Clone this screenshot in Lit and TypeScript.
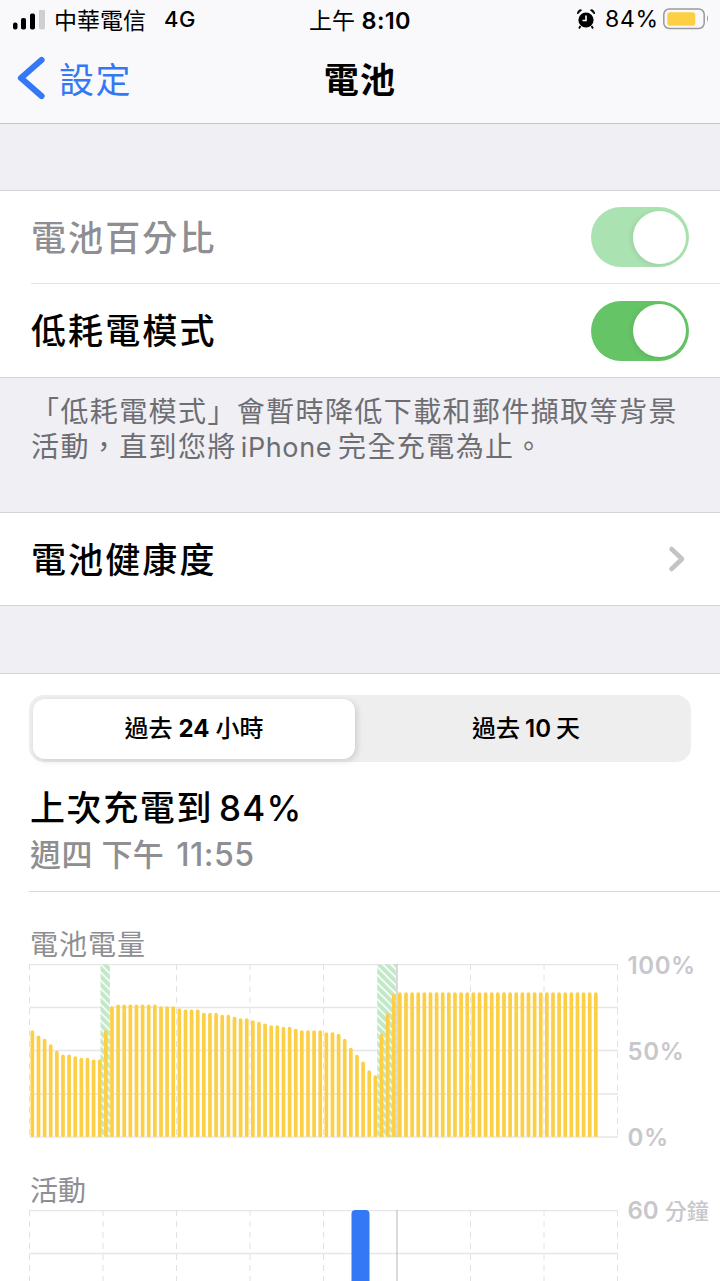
import { LitElement, html, css, svg } from "lit";
import { customElement } from "lit/decorators.js";

const rep = (v: number, n: number) => Array(n).fill(v);
// y of each bar's top edge, in page pixels
const tops: number[] = [
  1030.7, 1036, 1039.3, 1044.7, 1051.3, 1055, 1055, 1056.7, 1058.3, 1058.3, 1060, 1060,
  1030.7, 1006.7, ...rep(1005, 7), ...rep(1006.7, 3), 1008.7, ...rep(1010, 3), ...rep(1013.3, 3),
  ...rep(1015.3, 2), 1017.3, ...rep(1018.7, 2), 1020.7, 1022.3, 1024, ...rep(1025.7, 2),
  ...rep(1027.3, 2), 1029.3, ...rep(1030.7, 4), 1032.7, 1032.7, 1034.3, 1039.3, 1048.3, 1055.3,
  1062, 1070.7, 1075.7, 1034.3, 1013.7, 994.3, ...rep(992.7, 33),
];
const X0 = 28.5;
const Y0 = 964.5;
const verticals = [29, 102.5, 176, 249.5, 323, 396.5, 470, 543.5, 617];

@customElement("app-root")
export class AppRoot extends LitElement {
  static styles = css`
    :host {
      display: block;
      width: 720px;
      height: 1281px;
      overflow: hidden;
      background: #efeff4;
      font-family: Inter, "Noto Sans CJK TC", sans-serif;
      color: #000;
    }
    .head {
      height: 123px;
      background: #f9f9fb;
      border-bottom: 1px solid #c6c6c9;
    }
    .status {
      height: 40px;
      padding-bottom: 2px;
      box-sizing: border-box;
      display: grid;
      grid-template-columns: 1fr auto 1fr;
      align-items: center;
      font-size: 23px;
    }
    .st-left {
      display: flex;
      align-items: center;
      padding-left: 13px;
    }
    .signal {
      margin-top: 4px;
    }
    .carrier {
      margin-left: 8px;
    }
    .net {
      margin-left: 18px;
      font-weight: 500;
      font-size: 22px;
      letter-spacing: 0.5px;
    }
    .st-center b {
      font-weight: 600;
      font-size: 23.5px;
      letter-spacing: 0.4px;
    }
    .st-right {
      display: flex;
      align-items: center;
      justify-content: flex-end;
      padding-right: 11px;
    }
    .pct {
      margin-left: 10px;
      margin-right: 4px;
      letter-spacing: 0.8px;
    }
    .nav {
      height: 83px;
      display: grid;
      grid-template-columns: 1fr auto 1fr;
      align-items: center;
      padding-bottom: 8px;
      box-sizing: border-box;
    }
    .back {
      display: flex;
      align-items: center;
      gap: 13px;
      padding-left: 17px;
      color: #3478f6;
      font-size: 35px;
      letter-spacing: 1.6px;
    }
    .title {
      font-size: 35px;
      font-weight: 700;
      letter-spacing: 1.2px;
    }
    .gap1 {
      height: 66px;
    }
    .group {
      background: #fff;
      border-top: 1px solid #d4d4d7;
      border-bottom: 1px solid #d4d4d7;
    }
    .row {
      height: 92px;
      display: flex;
      align-items: center;
      justify-content: space-between;
      padding: 0 31px;
      font-size: 35px;
      letter-spacing: 2.1px;
      font-weight: 500;
    }
    .row span {
      margin-bottom: 4px;
    }
    .row.sep {
      height: 93px;
      box-sizing: border-box;
      margin-left: 31px;
      padding-left: 0;
      border-bottom: 1px solid #e2e2e4;
    }
    .row.tall {
      height: 93px;
    }
    .row.link {
      padding-right: 33px;
    }
    .dim {
      color: #8e8e93;
    }
    .switch {
      width: 98px;
      height: 60px;
      border-radius: 30px;
      background: #65c466;
      display: flex;
      align-items: center;
      justify-content: flex-end;
      padding-right: 3px;
      box-sizing: border-box;
    }
    .switch.soft {
      background: #aae2b1;
    }
    .knob {
      width: 53px;
      height: 53px;
      border-radius: 50%;
      background: #fff;
      box-shadow: -2px 1px 5px rgba(0, 0, 0, 0.08);
    }
    .note {
      height: 134px;
      box-sizing: border-box;
      padding: 17px 20px 0 31px;
      font-size: 28px;
      line-height: 35px;
      letter-spacing: 1.4px;
      color: #6d6d72;
      white-space: nowrap;
    }
    .note i {
      font-style: normal;
      margin: 0 6px 0 4px;
      letter-spacing: 0.6px;
      font-size: 27px;
    }
    .gap2 {
      height: 67px;
    }
    .panel {
      background: #fff;
      border-top: 1px solid #d4d4d7;
      height: 700px;
    }
    .seg {
      margin: 21px 29px 0;
      height: 67px;
      border-radius: 15px;
      background: #eeeeef;
      display: grid;
      grid-template-columns: 322px 1fr;
      align-items: center;
      box-sizing: border-box;
      padding: 3px 0 3px 4px;
      font-size: 24px;
      text-align: center;
      font-weight: 500;
    }
    .seg b {
      font-weight: 700;
      margin: 0 6px;
    }
    .seg em {
      font-style: normal;
      font-weight: 600;
      margin: 0 5px;
    }
    .seg .on {
      height: 60px;
      line-height: 60px;
      background: #fff;
      border-radius: 12px;
      box-shadow: 2px 2px 6px rgba(0, 0, 0, 0.14);
    }
    .seg .off {
      height: 60px;
      line-height: 60px;
      padding-left: 6px;
    }
    .last {
      margin: 24px 0 0 30px;
      font-size: 35px;
      line-height: 44px;
      font-weight: 500;
      letter-spacing: 1.6px;
    }
    .last span {
      letter-spacing: 1.2px;
      margin-left: 6px;
    }
    .when {
      margin: 5px 0 0 30px;
      font-size: 31px;
      line-height: 40px;
      color: #8e8e93;
      letter-spacing: 0.4px;
      white-space: pre;
      font-weight: 500;
    }
    .when span {
      margin-left: 12px;
      font-size: 32px;
      letter-spacing: 0.5px;
    }
    .divider {
      margin: 16px 0 0 29px;
      height: 1px;
      background: #d9d9db;
    }
    .cap {
      margin: 33px 0 0 30px;
      font-size: 28px;
      line-height: 40px;
      color: #8e8e93;
      letter-spacing: 1px;
    }
    .chart {
      display: flex;
      margin-left: 28.5px;
      margin-top: -1px;
    }
    .chart svg {
      display: block;
      flex: none;
    }
    .axis {
      margin: -12px 0 0 9px;
      height: 200px;
      display: flex;
      flex-direction: column;
      justify-content: space-between;
      font-size: 24px;
      line-height: 28px;
      font-weight: 600;
      color: #c7c7cc;
      letter-spacing: 0.6px;
    }
    .cap2 {
      margin: 19px 0 0 30px;
      font-size: 28px;
      line-height: 40px;
      color: #8e8e93;
      letter-spacing: 0;
    }
    .axis2 {
      margin: -13px 0 0 9px;
      font-size: 24px;
      line-height: 28px;
      font-weight: 600;
      color: #c7c7cc;
      white-space: nowrap;
    }
    .axis2 span {
      font-size: 22px;
      font-weight: 500;
      margin-left: 6px;
    }
  `;

  private grid(h: number, lines: number[]) {
    return svg`
      ${lines.map((y) => svg`<line x1="0.5" x2="589" y1=${y} y2=${y} stroke="#e6e6e8" stroke-width="1.5"></line>`)}
      ${verticals.map((x) =>
        x === 396.5
          ? svg`<line x1=${x - X0} x2=${x - X0} y1="0" y2=${h} stroke="#b5b5b8" stroke-width="1"></line>`
          : svg`<line x1=${x - X0} x2=${x - X0} y1="0" y2=${h} stroke="#e2e2e4" stroke-width="1" stroke-dasharray="6 5"></line>`,
      )}
    `;
  }

  render() {
    const bars = tops.map((t, i) => {
      const x = 30 + 6.125 * i - X0;
      const y = t - Y0;
      return svg`<rect x=${x} y=${y} width="3.7" height=${173 - y} rx="1.85" fill="#fccf45"></rect>`;
    });
    return html`
      <div class="head">
        <div class="status">
          <div class="st-left">
            <svg class="signal" width="33" height="22" viewBox="0 0 33 22">
              <rect x="0" y="12.5" width="4.5" height="7" rx="2" fill="#000"></rect>
              <rect x="8" y="8" width="5" height="11.5" rx="1.8" fill="#000"></rect>
              <rect x="17" y="3.5" width="5" height="16" rx="1.8" fill="#000"></rect>
              <rect x="26" y="-0.5" width="6" height="20" rx="1.8" fill="#cfcfd1"></rect>
            </svg>
            <span class="carrier">中華電信</span>
            <span class="net">4G</span>
          </div>
          <div class="st-center">上午 <b>8:10</b></div>
          <div class="st-right">
            <svg width="18" height="20" viewBox="0 0 18 20">
              <circle cx="9" cy="11" r="7.6" fill="#000"></circle>
              <path d="M9 6.5V11.5H5.5" fill="none" stroke="#fff" stroke-width="1.6"></path>
              <path d="M0.5 5 L4.5 1 Q1 0 0.5 5Z M17.5 5 L13.5 1 Q17 0 17.5 5Z" fill="#000" stroke="#000"></path>
              <path d="M3.5 17 L2 19.5 M14.5 17 L16 19.5" stroke="#000" stroke-width="1.8"></path>
            </svg>
            <span class="pct">84%</span>
            <svg width="46" height="22" viewBox="0 0 46 22">
              <rect x="0.8" y="1" width="40.4" height="19.5" rx="5.5" fill="none" stroke="#9a9a9c" stroke-width="1.5"></rect>
              <rect x="4.3" y="4.3" width="28" height="13.4" rx="2.5" fill="#fccf45"></rect>
              <path d="M44 7 Q46 10.5 44 14Z" fill="#9a9a9c"></path>
            </svg>
          </div>
        </div>
        <div class="nav">
          <div class="back">
            <svg width="29" height="44" viewBox="0 0 29 44">
              <path d="M24.5 4 L4 22 L24.5 40" fill="none" stroke="#3478f6" stroke-width="6.2" stroke-linecap="round" stroke-linejoin="round"></path>
            </svg>
            <span>設定</span>
          </div>
          <div class="title">電池</div>
          <div></div>
        </div>
      </div>

      <div class="gap1"></div>

      <div class="group">
        <div class="row sep">
          <span class="dim">電池百分比</span>
          <div class="switch soft"><div class="knob"></div></div>
        </div>
        <div class="row tall">
          <span>低耗電模式</span>
          <div class="switch"><div class="knob"></div></div>
        </div>
      </div>

      <div class="note">「低耗電模式」會暫時降低下載和郵件擷取等背景<br />活動，直到您將<i>iPhone</i>完全充電為止。</div>

      <div class="group">
        <div class="row link">
          <span>電池健康度</span>
          <svg width="20" height="28" viewBox="0 0 20 28">
            <path d="M4.5 4 L15 14 L4.5 24" fill="none" stroke="#c4c4c7" stroke-width="4.6" stroke-linecap="round" stroke-linejoin="round"></path>
          </svg>
        </div>
      </div>

      <div class="gap2"></div>

      <div class="panel">
        <div class="seg">
          <div class="on">過去<b>24</b>小時</div>
          <div class="off">過去<em>10</em>天</div>
        </div>
        <div class="last">上次充電到<span>84%</span></div>
        <div class="when">週四 下午<span>11:55</span></div>
        <div class="divider"></div>
        <div class="cap">電池電量</div>
        <div class="chart">
          <svg width="590" height="174" viewBox="0 0 590 174">
            <defs>
              <pattern id="hatch" patternUnits="userSpaceOnUse" width="5.7" height="8" patternTransform="rotate(-45)">
                <rect width="5.7" height="8" fill="#fff"></rect>
                <rect width="4.1" height="8" fill="#c2e8c9"></rect>
              </pattern>
            </defs>
            ${this.grid(173, [0.5, 43.5, 86.5, 130, 173])}
            <rect x=${100 - X0} y="0.5" width="9.4" height="172.5" fill="url(#hatch)"></rect>
            <rect x=${376.7 - X0} y="0.5" width="18.7" height="172.5" fill="url(#hatch)"></rect>
            ${bars}
          </svg>
          <div class="axis"><span>100%</span><span>50%</span><span>0%</span></div>
        </div>
        <div class="cap2">活動</div>
        <div class="chart">
          <svg width="590" height="72" viewBox="0 0 590 72">
            ${this.grid(72, [0.5, 43.5])}
            <rect x=${351 - X0} y="0" width="18" height="90" rx="4" fill="#3478f6"></rect>
          </svg>
          <div class="axis2">60<span>分鐘</span></div>
        </div>
      </div>
    `;
  }
}
